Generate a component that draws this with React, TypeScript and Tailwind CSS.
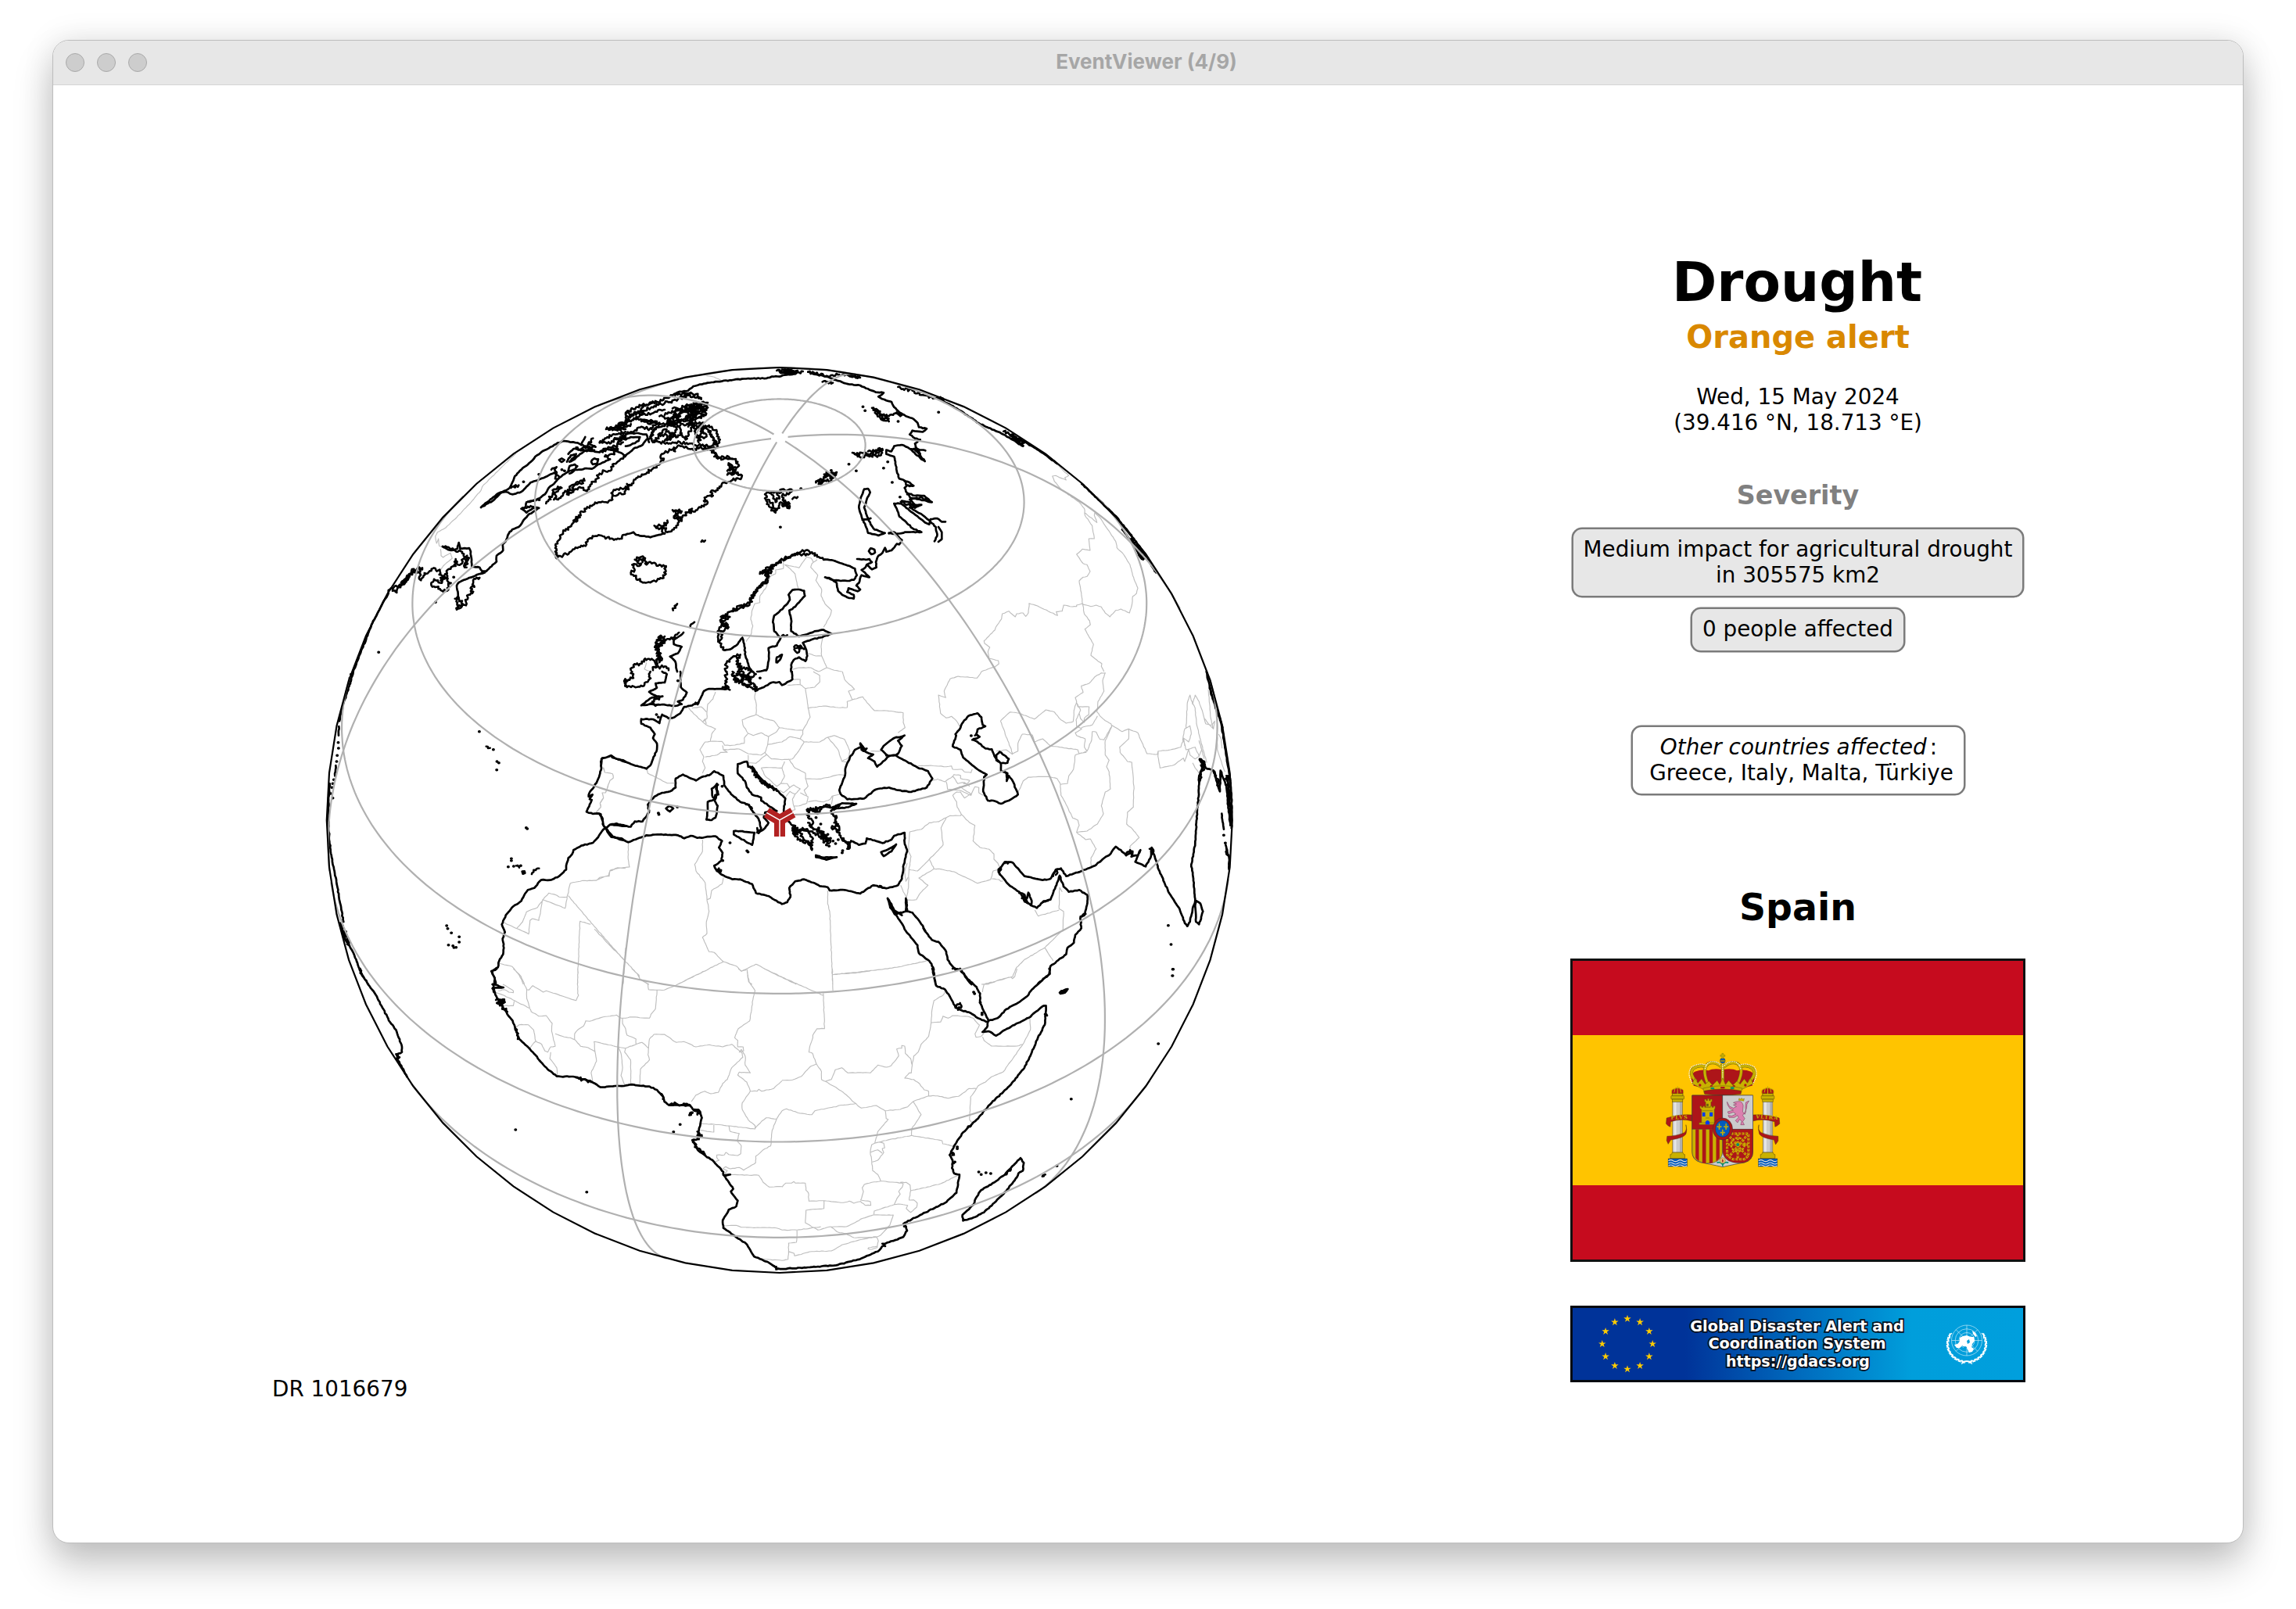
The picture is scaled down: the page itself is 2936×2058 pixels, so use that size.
import React from "react";

/* ------------------------------------------------------------------ */
/* Projection: near-side perspective seen from geostationary height    */
/* ------------------------------------------------------------------ */

const CX = 996.8;
const CY = 1050;
const R = 579;
const LAT0 = 39.416;
const LON0 = 18.713;
const P = 6.61;
const rad = (d: number) => (d * Math.PI) / 180;

function project(lon: number, lat: number): [number, number] | null {
  const f = rad(lat);
  const f0 = rad(LAT0);
  const dl = rad(lon - LON0);
  const cosc = Math.sin(f0) * Math.sin(f) + Math.cos(f0) * Math.cos(f) * Math.cos(dl);
  if (cosc < 1 / P) return null;
  const k = (Math.sqrt(P * P - 1) / (P - cosc)) * R;
  const x = k * Math.cos(f) * Math.sin(dl);
  const y = k * (Math.cos(f0) * Math.sin(f) - Math.sin(f0) * Math.cos(f) * Math.cos(dl));
  return [CX + x, CY - y];
}

function trace(points: ([number, number] | null)[]): string {
  let d = "";
  let pen = false;
  for (const p of points) {
    if (!p) {
      pen = false;
      continue;
    }
    d += `${pen ? "L" : "M"}${p[0].toFixed(1)} ${p[1].toFixed(1)}`;
    pen = true;
  }
  return d;
}

function graticule(): string[] {
  const out: string[] = [];
  for (const lat of [80, 60, 40, 20, 0, -20]) {
    const pts: ([number, number] | null)[] = [];
    for (let lon = -180; lon <= 180; lon += 1) pts.push(project(lon, lat));
    out.push(trace(pts));
  }
  for (const lon of [-120, -60, 0, 60, 120, 180]) {
    const pts: ([number, number] | null)[] = [];
    for (let lat = -80; lat <= 89; lat += 1) pts.push(project(lon, lat));
    out.push(trace(pts));
  }
  return out;
}

const limb = Array.from({ length: 60 }, (_, i) => {
  const a = rad(i * 6);
  return `${(CX + R * Math.sin(a)).toFixed(1)},${(CY + R * Math.cos(a)).toFixed(1)}`;
}).join(" ");

/* ------------------------------------------------------------------ */
/* Map data, grouped in tiles with a local coordinate system           */
/* ------------------------------------------------------------------ */

type Tile = {
  x: number;
  y: number;
  kx: number;
  ky: number;
  coast: string[];
  fjord: string[];
  border: string[];
  dots: string;
};

const tiles: Tile[] = [
  {
    x: 400, y: 460, kx: 3, ky: 3,
    coast: [
      "498 720 512 728 530 735 555 728 560 705 565 728 600 726 606 740 610 795",
      "645 570 680 540 705 520 740 505 755 495 765 475 775 450 800 425 830 400 860 370 890 350 920 335 940 322 965 315 990 320 1015 322 1030 330 1045 300",
      "645 570 690 545 720 515 740 510 765 520 800 510 820 490 835 475 855 468 900 450 920 440 935 435 930 460 940 462 925 480 905 495 890 520 870 535 850 545 825 548",
      "610 798 640 800 650 815 665 815 690 790 705 778 705 755 720 745 730 735 728 712 740 700 752 670 765 655 790 645 805 625 825 600 848 585 868 572 850 570 835 580 820 590 800 575 815 570 820 550 840 545 865 540",
      "660 820 630 828 600 840 560 858 552 870 560 918",
      "945 388 955 382 965 388 955 396 945 388",
      "940 462 960 445 985 430 1000 425 1030 425 1045 420 1070 422 1095 405 1120 395 1140 385",
      "975 395 990 370 1010 365 1000 380 985 395 1005 385 1025 365 1050 350",
      "980 430 985 412 1005 405 1015 412 1000 432 985 440",
      "1070 390 1080 382 1095 385 1090 402 1075 405 1068 395 1070 390",
      "980 365 1000 345 1030 350 1060 352 1100 358 1120 345 1150 350 1170 345",
      "155 1200 180 1135 205 1075 225 1020 262 950 290 900",
    ],
    fjord: [
      "290 895 300 880 322 897 335 875 350 858 342 868 365 838 388 806 398 822 402 803 420 802 408 820 415 850 428 822 445 818 455 806 470 804 488 816 485 828 500 838 492 850 515 840 508 825 530 800 548 795 548 768 556 790 575 778 578 755 568 738 545 735 520 722 498 720",
      "310 878 330 870 350 848 370 825 395 812 350 855 325 880",
      "590 800 580 795 585 770 592 755 596 770 588 790 582 800",
      "640 840 615 850 620 875 605 880 612 900 598 905 585 925 590 940 568 955 552 962 555 935 545 920 560 918 575 940 560 945",
      "455 870 465 845 480 850 495 860 490 840 505 830 515 850 530 860 520 870 515 890 495 890 475 875 455 870",
      "935 765 932 750 935 730 932 710 950 685 960 665 985 645 1000 620 1020 600 1050 575 1075 560 1100 550 1125 550 1150 540 1145 515 1165 500 1190 500 1200 490",
      "935 765 960 755 990 740 1020 722 1050 712 1060 690 1090 680 1130 685 1150 690 1180 690 1200 675",
      "1145 515 1155 525 1175 515 1190 520 1200 505",
      "895 555 905 540 920 520 925 500 940 490 955 495 935 510 925 540 945 535 960 515 985 505 975 520 1000 510 985 490 1010 475 1040 460 1030 480 1000 490 1000 505 1030 495 1045 505 1060 500 1070 480 1090 460 1100 440 1120 430 1140 430 1150 405 1165 400 1180 385 1200 370",
      "1030 330 1050 340 1070 345 1085 338 1055 330 1075 305",
      "1010 340 1040 352 1080 350 1050 335 1030 345",
      "1100 320 1130 300 1160 290 1200 280",
      "1100 322 1140 325 1170 305 1200 300",
      "1100 358 1130 345 1160 335 1190 320",
      "1140 385 1120 375 1150 365 1170 350 1150 340",
      "915 425 935 415 930 440 945 455",
      "760 495 790 485",
      "800 575 830 570 860 572",
      "1000 620 1015 622 1025 608",
      "1125 270 1155 265 1190 250",
      "1140 272 1180 262 1200 270",
    ],
    border: [
      "780 362 720 420 650 490 645 505 600 558 545 615 510 648 478 665 470 680 475 708 482 690 485 718 500 722",
      "490 730 492 755 500 762 528 745 535 765 500 795 488 815",
    ],
    dots: "252 1126 470 934 867 443 775 492 808 472 540 838 955 425 965 430 868 541 648 822 635 842",
  },
  {
    x: 800, y: 460, kx: 3, ky: 3,
    coast: [
      "180 140 200 128 240 122 260 105 300 95 330 90 400 82 470 75 540 75 560 68 590 68 610 62 640 58",
      "700 50 730 60 770 68 800 80 860 98 900 102 930 115 960 128 990 130 970 145 1000 160 1020 165 1030 185 1050 205 1075 220 1100 228 1120 245 1125 262 1155 268 1140 280 1100 275 1090 290 1110 305 1130 310 1110 325 1115 345",
      "1030 335 1060 330 1090 345 1130 380 1148 393 1130 370 1105 345 1150 352",
      "1090 345 1115 350 1130 365 1115 340",
      "1030 335 1020 355 1000 350 1000 365 1030 375 1035 395 1040 430 1050 460 1075 470 1090 475 1105 487 1080 485 1070 495 1080 515 1110 525 1145 525 1175 550 1130 540 1110 535 1090 540 1110 560 1135 560 1110 572 1090 550 1060 545",
      "1060 555 1030 555 1040 575 1050 605 1075 625 1100 650 1135 665 1080 665 1035 672 1010 668",
      "1060 558 1100 590 1145 625 1165 635 1170 615 1195 612 1212 625 1227 625",
      "1090 570 1140 600 1165 620 1190 645 1195 680 1185 700",
      "1200 645 1213 665 1213 692 1200 702",
      "1035 672 1060 695 1050 712 1040 710 1020 735 1000 740 995 725 985 745 970 755 960 780 962 800 945 808 925 790 920 800 905 810 935 838 905 830 895 860 885 870 900 885 890 892 855 880 850 895 875 905 875 920 850 915 830 905 815 890 810 860 780 840 765 838 800 850 850 852 875 848 887 830 880 805 860 795 830 785 790 772 765 770",
      "925 790 945 780 935 768 905 770 888 768",
      "933 738 940 727 955 732 957 743 943 750 933 738",
      "448 1070 455 1095 460 1140 475 1185 485 1200",
      "595 1070 570 1045 565 1010 570 985 590 970 615 945 630 925 625 905 640 887 665 885 685 890 688 910 665 935 640 960 628 965 635 1000 635 1045 665 1065 700 1055 725 1045 760 1040 790 1055 755 1068 720 1075 680 1090 690 1110 697 1140 690 1160 665 1145 645 1155 635 1175 635 1200",
      "595 1070 580 1100 548 1110 550 1150 545 1180 540 1195 505 1200",
      "578 1165 580 1145 600 1135 595 1150 582 1165",
      "900 540 915 500 930 498 938 512 925 540 915 570 925 600 940 635 955 655 995 668 970 678 930 668 920 640 905 605 895 570 900 540",
      "908 618 940 612",
      "380 1118 400 1115 430 1095 448 1070",
      "0 675 30 665 40 675 95 685 150 670",
      "198 1200 190 1160 170 1142 200 1130 215 1105 185 1095 185 1078 205 1065 222 1050",
      "-85 345 -40 350 0 372",
      "0 372 30 345 65 330 85 305 80 290 40 285 0 288",
      "0 310 20 300 55 300 50 315 20 330 0 335",
      "105 320 95 300 105 275 120 262 150 258",
    ],
    fjord: [
      "765 770 735 760 715 742 690 735 665 745 640 755 610 765 585 785 550 800 515 825 545 820 540 845 520 865 505 885 490 905 475 935 445 945 420 960 375 985 365 1010 390 1018 360 1030 355 1080 365 1100 380 1118",
      "710 745 680 750 650 748 620 765 590 775 570 790 555 810 540 825",
      "560 795 545 810 560 815 535 830 550 835 545 850 525 870 510 880",
      "500 885 485 915 475 945 440 955 415 965",
      "365 990 400 990 370 1005 395 1030 362 1045 370 1070 355 1085",
      "0 500 30 470 60 450 100 425 130 405 145 390 135 370 150 360 175 350 190 355 185 340 210 335 240 345 260 350 290 340 320 345 345 360 340 375 365 380 395 375 415 385 430 395 430 415 400 420 395 400 430 440 390 445 430 435 445 455 410 465 380 475 360 490 345 510 330 505 335 525 310 530 300 545 315 550 290 570 275 580 245 590 255 575 225 600 205 610 190 600 215 585 180 580 200 595 185 610 215 615 200 630 185 655 160 665 145 645 155 640 160 620 145 640 110 640 140 655 150 670",
      "325 350 350 370 375 385 410 385",
      "390 430 415 425 405 440",
      "0 505 20 485 5 480",
      "20 820 35 810 25 790 45 795 60 785 35 770 60 760 75 765 75 785 100 785 130 790 155 795 150 830 130 845 100 855 60 855 40 840 20 820",
      "50 775 70 765 65 780",
      "540 515 590 515 600 500 640 505 625 520 600 525 610 550 630 565 620 572 595 550 590 560 575 590 555 570 540 545 540 515",
      "560 520 575 550 590 530 580 515",
      "545 540 565 560 575 580",
      "605 545 625 550 620 570 600 560",
      "640 538 660 530",
      "730 475 760 460 770 435 800 440 785 450 810 435 790 465 760 470 740 480",
      "770 440 785 460 800 450 765 455 780 445 795 458",
      "730 470 755 475 745 465",
      "870 360 890 375 915 378 930 365 905 360 885 368 870 360",
      "930 355 960 350 985 345 960 365 935 375 950 360",
      "985 345 980 370 960 372",
      "945 188 970 200 985 215 1005 220 1010 240 985 235 965 215 950 190",
      "960 200 990 230 1000 225",
      "1010 220 1030 210 1060 215 1040 205",
      "1070 470 1085 485 1100 488",
      "1080 520 1105 535 1140 535 1170 548",
      "1055 548 1080 560 1110 568",
      "1010 670 1035 668",
      "650 1100 675 1105 665 1125 650 1120 650 1100",
      "655 1110 690 1110",
      "385 1200 388 1165 410 1145 440 1135 425 1160 445 1180 430 1200",
      "425 1160 440 1190 470 1188 480 1200",
      "120 1160 125 1140 115 1100 130 1065 150 1065 145 1085 165 1075 180 1075 205 1050",
      "130 1160 135 1130 125 1110 140 1100 135 1080 150 1090",
      "120 1140 140 1150 130 1165 125 1120 120 1085 140 1070",
      "20 1195 30 1175 55 1170 75 1150 105 1155 115 1170 105 1195",
      "120 1165 115 1185 150 1180 165 1195",
      "248 1030 258 1015 264 1010",
      "182 965 188 948 198 940 190 955",
      "290 702 305 697",
      "600 1062 620 1060",
      "-75 270 -40 262 0 235 30 215 60 190 100 170 140 160 180 140",
      "-60 272 -30 275 0 262 20 250",
      "-40 262 -10 255 15 235 0 225",
      "0 225 50 205 100 185 150 170 200 155 240 140 290 155",
      "0 215 20 195 60 180 90 172 120 165",
      "0 250 40 230 80 235 120 240 100 270 60 260 20 280 0 290",
      "90 320 110 270 140 250 200 240 250 230 300 220",
      "110 320 150 270 180 300 200 260 230 310 260 250 280 320 300 260 330 290 350 330 300 335 250 325 180 320 110 320",
      "130 220 180 230 200 190 240 210 260 170 310 170 310 210 270 230 240 250",
      "270 270 320 255 350 280 362 310 350 340 300 345",
      "150 215 190 200 230 180 300 190 250 195 200 215 160 240 190 260",
      "160 245 220 235 280 210 240 190 190 220 220 250 300 245",
      "180 190 230 200 290 180 300 205 240 215",
      "230 180 280 175 315 168 295 190 250 185",
      "125 290 160 295 150 315 175 305 170 285 200 300 215 285",
      "60 240 90 250 130 245 90 240",
      "30 235 60 215 110 205 150 195",
      "160 260 190 245 180 225 210 220 200 240 180 255 210 255",
      "260 200 300 200 310 190 280 188 250 205",
      "230 225 260 215 270 225 240 235",
      "290 280 310 290 300 305 280 295",
      "320 275 335 300 345 320 330 335",
      "240 260 270 255 310 262 290 270",
      "210 150 240 135 270 135 290 150",
      "190 140 220 132 250 130",
      "-45 310 0 295 -30 320 0 305",
      "0 212 40 210 70 200 40 215",
      "580 45 620 52 660 45 600 40 640 60 680 48",
      "600 44 650 50 625 58 590 48",
      "700 50 760 65 820 60",
      "755 88 795 92 765 85",
      "860 62 900 72 870 70 830 62",
      "1045 108 1100 122 1150 140 1200 155",
    ],
    border: [
      "310 65 340 70 365 82",
      "735 770 715 785 710 800 737 830 730 850 752 885 750 910 765 940 790 965 785 985 760 1030",
      "610 790 625 800 650 825 655 850 662 885",
      "610 790 635 795 665 802 680 780 695 760 712 765 720 780",
      "605 770 605 805 575 810 575 825 555 835 540 875 515 910 515 935 495 940 485 965 480 1000 488 1025 480 1060 462 1085",
      "755 1070 750 1105 752 1140 730 1140 697 1130",
      "752 1140 772 1185 740 1200",
      "772 1185 800 1195 830 1200",
      "640 1192 665 1185 710 1185 740 1200",
      "80 1165 72 1190 95 1200",
    ],
    dots: "910 184 918 199 856 404 884 430 989 419 1022 474 1052 530 593 646 672 498 1045 240 788 428 1005 395 1200 205",
  },
  {
    x: 1200, y: 460, kx: 3, ky: 3,
    coast: [
      "0 152 70 190 155 247 250 290 320 332",
      "330 318 410 368 455 402",
      "550 480 620 545 680 605",
      "680 603 730 665 790 745 835 820",
      "705 655 740 700 780 768 792 765",
      "760 715 800 760 830 815",
      "285 305 325 333",
    ],
    fjord: ["250 278 290 295 320 330 290 305 330 322 280 290 325 335", "740 690 765 735 785 770 760 720", "0 150 20 158 0 152"],
    border: [
      "455 405 500 448 485 455 490 465 450 448 437 450 445 470 470 500 540 550 560 575 562 600 590 640 598 690 577 690 582 735 552 730 530 750 555 785 570 790 582 815 570 835 555 838 540 852 545 880 553 940",
      "560 590 608 628 598 600 600 590 620 610 650 655 680 700 685 725 710 750 735 790 745 830 765 880 760 900 745 912 742 945 733 975 700 960 680 965 658 990 640 975 625 952 605 945 585 950 550 940 530 945 530 950 505 950 480 945 475 968 452 970 457 985 380 948 348 938 345 975 335 988 325 975 300 978 295 990 270 968 245 978 242 998 220 1030 217 1040 175 1082 177 1092 197 1107 190 1125 195 1150 230 1158 232 1170 215 1183 190 1190 165 1200",
      "553 940 560 980 580 1005 583 1020 562 1037 580 1070 595 1095 585 1138 600 1150 627 1170 625 1180 635 1200",
    ],
    dots: "",
  },
  {
    x: 400, y: 860, kx: 3, ky: 3,
    coast: [
      "155 0 145 40 130 85 115 130 102 190",
      "65 430 60 500 60 600 68 690 80 750 95 830 105 890 118 960",
      "105 965 120 1020 140 1050 160 1090 185 1155 213 1200",
      "100 210 99 245",
      "88 360 85 400",
      "1200 347 1150 330 1143 322 1130 328 1110 332 1105 345 1107 370 1098 405 1080 440 1060 468 1058 480 1073 472 1062 490 1070 492 1062 510 1050 538 1075 546 1100 545 1112 565 1112 585 1125 600 1140 588 1165 583 1200 592",
      "1200 650 1185 640 1145 635 1130 615 1125 600 1115 605 1095 635 1075 657 1030 668 1000 685 995 700 980 715 972 745 972 760 945 785 910 800 875 800 850 830 825 838 810 860 800 880 770 900 740 935 725 970 737 1000 728 1025 733 1060 730 1085 715 1110 710 1135 685 1150 697 1175 702 1200",
      "803 767 812 766 814 773 806 776 803 767",
    ],
    fjord: ["110 970 120 1010 138 1050 130 1010 115 985", "840 777 855 762 868 755", "665 287 672 294 680 293", "145 10 138 50", "180 1145 188 1160", "780 745 792 752 786 744"],
    border: [
      "1113 368 1120 387 1150 392 1153 408 1140 418 1123 465 1110 465 1115 485 1102 505 1105 520 1087 540",
      "1200 755 1170 752 1140 763 1137 785 1100 790 1087 802 1035 802 988 812 978 855 975 865 945 865 935 858 905 850 885 872 862 905 820 922 805 960 782 985",
      "730 962 828 1007 833 955 842 948 867 955 882 875 968 908 978 855",
      "980 860 1080 978 1195 1107",
      "1066 970 1025 958 1015 1200",
      "715 1120 735 1125 765 1132 792 1165 808 1200",
      "1200 1060 1190 1200",
    ],
    dots: "97 272 98 294 93 322 91 345 80 415 76 430 73 445 68 468 76 485 638 230 692 299 706 345 713 350 705 377 818 599 822 603 761 718 761 725 749 749 770 747 797 745 513 975 517 986 531 1003 561 1018 561 1038 520 1049 537 1052 541 1059 549 1058 1198 45 1196 38 1199 55",
  },
  {
    x: 760, y: 860, kx: 3, ky: 3,
    coast: [
      "27 370 27 335 50 328 65 322 85 335 110 340 140 355 165 362 200 373 215 360 225 335 240 300 240 275 225 255 232 240 215 215 180 200 180 182 225 183 250 198 260 165 285 180 300 178 330 160 345 135 375 130 400 118 420 75 440 66 500 68 510 65",
      "610 45 625 70 650 60 680 42 710 40 720 52 745 38 760 30 758 0",
      "330 0 332 60 355 80 340 108 320 115 335 125 310 132 275 128 215 125 180 130 220 100 262 95 240 95 210 78 240 62 235 45 270 42 278 10 260 0",
      "0 545 25 547 35 590 45 603 60 587 140 595 155 575 185 575 210 540 205 510 230 480 260 465 290 460 312 445 312 410 340 395 390 418 420 402 440 398 460 382 495 400 498 435 530 475 560 500 590 510 615 545 630 565 640 600 630 620 655 600 668 580 650 560 655 540 670 535 700 535 640 495 640 483 605 472 585 445 578 420 550 390 550 355 585 345 590 365",
      "590 365 610 370 630 400 665 435 700 455 733 487 725 545 735 565 760 590 770 600",
      "535 612 560 612 615 618 605 665 560 640 535 625 535 612",
      "470 432 450 450 452 475 462 492 472 470 470 432",
      "435 500 460 490 473 515 465 560 450 570 430 568 435 530 435 500",
      "275 525 290 515 303 525 290 537 275 525",
      "45 603 70 632 130 655 200 628 250 625 320 628 345 640 370 630 395 638 465 632 490 650 478 675 492 695 488 725 460 745 470 765 500 785 530 797 560 797 605 815 620 850 670 862 720 892 740 885 752 865 748 830 770 805 805 797 840 810 865 823 895 827 903 840 960 838 1020 852 1070 820 1120 832 1165 820 1180 795 1187 740 1200 690 1190 655 1190 618 1150 630 1140 645 1105 658 1045 640 1040 660 1015 665 985 650",
      "850 705 870 712 930 712 890 722 850 712 850 705",
      "1100 693 1125 683 1158 663 1140 690 1110 708 1100 693",
      "940 455 960 405 965 365 980 330 1000 300 1020 290 1040 298 1020 275 1025 300 1045 310 1070 318 1050 332 1075 345 1085 365 1130 325 1150 320 1180 335 1240 368 1280 382 1297 410 1275 445 1215 462 1165 455 1130 445 1080 452 1035 487 970 490 945 470 940 455",
      "1130 325 1100 300 1110 285 1150 255 1190 245 1165 265 1180 285 1165 315 1150 322 1120 322",
      "1195 870 1195 920 1160 930 1125 870 1135 905 1175 960 1195 995 1240 1050 1245 1080 1285 1110 1300 1135 1305 1180 1310 1200",
      "1197 875 1200 920 1220 925 1260 975 1265 990 1295 1030 1320 1037",
      "1125 870 1140 892 1150 915 1180 935",
      "920 530 930 515 950 505 1005 507 975 520 935 525",
    ],
    fjord: [
      "115 35 125 60 190 55 210 30 215 0",
      "115 35 150 25 145 0",
      "250 100 215 122 240 128",
      "505 68 508 40 503 20 508 0",
      "520 70 515 60 500 60 490 66",
      "530 0 540 40 570 35 560 15 590 10 580 30 600 40",
      "535 15 555 45 575 20 545 8 570 0 590 25",
      "545 30 580 50 605 45 590 15 600 0",
      "600 0 620 10 600 20",
      "560 40 600 60 625 72 615 50",
      "598 365 615 390 630 410 655 430 690 450 670 440 640 420",
      "600 370 612 380 606 365",
      "645 430 680 445 700 458",
      "930 525 905 522 880 520 850 520 860 540 820 530 820 560 840 580 825 590 870 620 890 640 840 620 810 605 770 605 790 620 800 650 830 660 835 685 820 655 790 650 770 625 760 600",
      "760 600 765 625 780 625 770 610",
      "815 530 840 525 855 545 870 520 890 510 905 520",
      "820 580 850 605 880 615 890 640",
      "765 590 785 610 820 612 835 635 830 670",
      "910 545 930 560 920 580 940 600 930 615 945 630 960 650 975 655 985 650",
      "920 555 935 585 910 600 940 610",
      "960 650 980 670 970 680 975 655 950 645",
      "870 625 880 650 900 660 890 640 905 655",
      "910 545 915 525 940 515",
      "582 510 605 525",
      "1020 280 1030 300 1045 295",
      "470 760 485 768 478 755",
      "1095 822 1110 830",
      "470 430 474 460 464 490",
      "625 618 632 610 625 600",
      "1262 985 1270 995",
      "385 125 400 120",
    ],
    border: [
      "35 368 40 387 70 392 73 408 60 418 43 465 30 465 35 485 22 505 25 520 7 540",
      "200 373 205 390 245 410 280 428 310 428",
      "415 390 425 370 415 345 420 328 405 300 425 270 445 268 450 240 465 220 430 205 400 180 370 150 360 135",
      "420 190 432 180 432 155 435 125 455 105 465 78",
      "375 140 410 135 430 155",
      "415 195 425 182 430 200",
      "445 268 490 268 500 283 530 283 575 275 575 255 590 237 570 205 567 185 620 165 622 130 615 95 620 70",
      "425 328 470 320 485 310 510 310 495 300 492 283",
      "495 300 555 297 590 315 640 320 655 310 665 280 668 250 640 235 610 245 590 237",
      "620 165 650 180 690 190 710 215 700 230 668 250",
      "710 215 740 220 780 225 800 225 800 240 790 258 750 250 720 270 680 278 665 280",
      "800 225 815 200 828 175 820 140 815 100 810 65 790 50 740 52",
      "790 50 790 30 760 30",
      "810 65 845 60 865 40 865 15 840 0",
      "820 140 880 132 935 138 970 138 970 115 990 108 975 75 998 68 960 30 952 0",
      "990 108 1030 97 1045 118 1075 150 1120 150 1185 158 1185 195 1192 215 1165 235",
      "790 258 805 270 780 310 760 335 720 338 680 335 660 318 655 310",
      "805 270 865 270 895 252 935 300 950 345 975 330 980 305 960 260 920 245 895 252",
      "950 345 975 348",
      "745 335 770 370 810 390 810 410 870 412 940 395 960 398",
      "590 320 590 350 620 352 660 318",
      "640 370 655 400 700 440 715 430 730 400 720 370 670 368 640 370",
      "720 370 730 345",
      "715 430 740 430 750 445 725 465 710 455",
      "750 445 765 435 790 450 770 470 750 460 735 480",
      "770 470 760 490 765 515 785 515 815 505 820 480 790 465",
      "810 410 820 440 805 455 815 475",
      "765 515 770 530 740 540",
      "820 500 850 495 880 500 905 490 912 478 940 470",
      "915 478 910 510",
      "130 655 130 720 135 750 90 755 60 765 55 782 0 802",
      "415 645 415 690 385 740 390 765 425 810 432 870 440 920 430 960 432 1005 415 1020 440 1075 460 1078 495 1113",
      "495 790 490 815 450 840 445 870 432 875",
      "495 1113 320 1200",
      "495 1113 545 1130 565 1150 620 1123 775 1200",
      "585 1140 592 1190 605 1200",
      "895 840 895 890 903 920 908 1050 914 1200",
      "914 1163 1010 1155 1160 1135 1285 1108",
      "0 988 165 1160 175 1180 210 1200",
      "1175 820 1197 870 1205 830 1207 760 1215 710 1205 690 1210 615 1255 605 1285 580 1320 575",
      "1197 877 1235 875 1250 850 1280 820 1245 792 1303 757 1320 757",
      "1207 760 1240 765 1285 720 1320 685",
      "1285 720 1303 757",
      "1200 735 1190 770 1195 805 1203 790",
      "1060 305 1100 305",
      "1240 362 1290 360 1320 363",
      "1295 418 1320 412",
    ],
    dots: "238 165 245 175 245 543 247 548 318 520 520 657 585 688 589 692 492 725 950 695 952 687 868 585 895 625 850 560 890 665 915 650 900 670 880 655 925 660 490 440 635 25 320 35 870 640 860 600 935 645 905 640",
  },
  {
    x: 1200, y: 860, kx: 3, ky: 3,
    coast: [
      "55 287 68 245 65 240 85 215 90 200 115 170 150 160 165 175 170 205 180 210 150 222 145 240 158 250 130 262 150 270 180 295 205 298 215 325 240 355 240 380 265 390 262 420 270 400 285 420 305 472 270 495 240 507 210 495 190 495 172 460 175 405 185 395 150 375 95 330 85 300 55 287",
      "235 308 270 335 265 350 240 352 222 340 222 320 235 308",
      "235 778 232 760 255 730 285 733 330 785 400 800 430 795 450 760 470 755 490 785 550 765 600 745 630 720 660 700 680 672 700 685 720 705 745 690 740 710 765 705 775 685",
      "775 685 755 730 795 748 815 710 818 675 830 710 845 760 885 850 925 910 945 965 955 977 965 960 975 910 985 880 980 810 970 740 985 660 992 540 998 480 1000 400 1015 360 1002 338 1020 345 1025 370 1055 380 1080 460 1082 380 1105 440 1110 500 1120 590",
      "235 778 275 823 310 845 335 880 355 897 378 907 400 885 430 875 465 783 480 825 500 845 540 838 572 858 570 895 560 935 545 940 548 985 525 1010 520 1040 495 1060 490 1085 430 1130 425 1160 380 1200",
      "335 880 345 848 358 880 355 897",
      "990 880 1005 890 1015 920 1000 970 988 960 985 900 990 880",
      "1087 545 1090 575 1095 605",
      "1102 665 1108 690 1115 715 1115 760",
      "1028 0 1045 80 1085 200 1110 360 1120 420 1125 500 1124 600",
      "1035 20 1050 90 1070 150 1090 215",
      "1110 400 1116 480 1124 590",
      "0 1037 30 1075 35 1105 60 1138 85 1147 127 1200",
    ],
    fjord: [
      "1002 335 1015 345 1010 365 1018 370 1005 400 1000 425",
      "720 705 735 685 745 705",
      "810 680 825 685 820 700",
      "1105 400 1112 430 1108 450",
      "1055 380 1065 400 1078 450",
      "440 785 455 760 450 780",
      "310 850 330 862 320 870 345 890 330 855",
      "400 885 420 880",
      "230 765 240 755 235 775",
      "550 940 565 930",
      "255 735 270 732",
      "255 385 262 415",
      "140 245 155 250",
      "1105 680 1110 705",
    ],
    border: [
      "165 0 148 25 75 18 45 28 22 75 28 100 0 90 8 160 30 178 50 172 70 190 80 208 90 205",
      "0 363 30 365 50 362 55 375 90 375 100 385 125 388 130 375",
      "0 415 25 423 55 402 60 395 85 398 85 410 120 418 110 430 95 430",
      "30 423 35 452 80 455 125 475 140 442 155 445 155 465 172 475",
      "80 440 125 470 100 485 85 462 70 462 55 475 70 500 72 520 88 548 120 580 140 590 133 650 160 675 195 682 213 700 213 720 228 735 235 750",
      "55 402 75 430 100 425 120 440",
      "0 577 30 560 45 553 85 553 88 548",
      "30 560 10 600 18 665 0 685",
      "0 757 60 768 150 812 200 798 210 765 232 760",
      "205 795 232 798 240 805 248 803",
      "165 1200 190 1200 230 1185 285 1170 300 1135 330 1105 408 1060 478 990 480 920 463 910 465 828 475 845",
      "463 915 383 938 370 915",
      "408 1060 440 1110",
      "238 190 275 155 310 160 368 182 412 147 445 155 470 185 490 198 517 192 520 150 530 115 525 100 555 80 548 55 578 45 600 20 625 5 640 5 630 35 635 75 612 115 608 155 625 175 640 188 662 200 665 210 635 262 620 260 605 232 590 230 588 262 570 305 560 290 563 258 530 245 525 235 550 220 530 210 528 185 540 160 545 148 530 120 535 135 578 135 577 165 560 178 560 195 545 180 540 160",
      "238 190 285 315 305 305 305 275 322 240 360 243 368 270 400 258 430 285 535 300 540 315 525 320 518 375 500 400 495 430 468 433",
      "222 305 260 300 285 318",
      "548 215 590 205 610 170",
      "570 305 540 315 568 310",
      "305 465 325 420 345 405 420 403 455 410 468 433 470 475 490 510 515 562 535 570 540 590 530 617 565 645 583 642 605 680 585 715 585 750",
      "530 617 570 612 610 585 633 545 625 515 640 462 660 450 655 385 645 365 655 340 640 320 640 265 665 210",
      "662 205 705 230 730 220 765 235 780 270 800 315 840 318 843 305 890 300 930 290 940 260 950 300 985 290 1000 325 985 335 965 320 960 300",
      "730 220 730 258 695 290 697 310 725 345 742 348 750 440 748 520 725 540 722 585 745 605 770 637 735 670 735 690",
      "843 305 842 325 850 370 905 358 940 332 945 345 960 300",
      "937 265 945 220 965 208 970 240 960 270 940 255 945 285",
      "950 215 955 120 965 90 975 125 985 90 1000 115 1015 160 1025 200 1050 205 1060 190 1055 220 1040 205 1020 180",
      "970 110 985 140 990 200 1010 280 1030 350",
      "1000 325 1010 300 1000 265 1020 335",
      "975 350 985 370 1000 390",
      "1035 70 1045 180 1055 220",
      "1045 90 1060 140 1070 165 1070 300 1088 355 1100 385",
      "1075 240 1085 260 1088 295",
    ],
    dots: "125 246 881 974 892 1047 900 1142 898 1167 1094 628 1100 658",
  },
  {
    x: 400, y: 1240, kx: 2.6133, ky: 3,
    coast: [
      "615 0 598 12 608 35 605 60 637 72 605 75 610 100 620 120 640 122 615 132 632 140 650 175 668 200 680 240 690 270 735 320 775 375 815 413 870 414 930 433 962 455 1010 450 1040 450 1060 445 1125 452 1150 465 1170 490 1175 510 1190 523 1260 525 1275 545 1292 548 1300 572 1290 620 1285 655 1268 658 1290 700 1340 740 1372 780 1372 792 1395 790 1375 795 1405 845 1397 855 1420 890 1415 912 1390 925 1370 965 1372 995 1448 1055 1475 1105 1520 1125 1550 1150 1568 1152",
      "158 0 162 20 210 100 258 205 278 235 298 300 298 320 280 330 282 345 315 415",
    ],
    fjord: [
      "612 120 640 118 618 130 642 128 625 142 635 120",
      "600 60 605 90",
      "625 140 650 165",
      "678 230 685 270",
      "1190 523 1215 518 1225 525 1250 518 1262 525",
      "1165 480 1170 500",
      "1275 540 1295 550 1285 560",
      "1285 625 1300 645 1285 640 1290 655",
      "1270 665 1285 690",
      "880 418 930 435",
      "1540 1140 1555 1152",
      "278 328 290 340 280 345",
      "1258 562 1268 552 1260 555",
      "1290 690 1310 712",
    ],
    border: [
      "670 0 695 28 715 80 715 115 725 150",
      "885 0 885 95 888 102 880 122 780 85 770 90 735 65 722 82 715 80",
      "605 90 640 103 675 123 725 152",
      "635 60 650 70 670 85 670 92 655 90 640 80 620 85",
      "640 142 670 142 673 125",
      "725 152 730 165 755 182 780 180 800 210 798 240 810 298 795 300 785 320 775 315 765 290 745 278 725 305",
      "680 225 690 215 720 215 738 235 745 278",
      "795 320 792 345 815 380 818 413",
      "810 250 840 262 860 265 875 272 875 250 885 235 905 220 912 200 925 202 970 185 1015 178 1030 190 1045 190 1060 185 1125 190 1130 175 1145 155 1150 82",
      "875 272 895 298 920 303 943 318 940 280 1020 300 1045 305 1080 290 1080 270 1050 255 1045 230 1035 210 1035 190",
      "943 318 948 355 930 400 935 430",
      "1020 300 1030 325 1035 380 1030 410 1042 445",
      "1045 305 1042 320 1062 350 1063 445",
      "1080 290 1100 283 1122 305 1120 330 1125 350 1095 385 1093 445",
      "1122 305 1125 270 1140 252 1175 252 1215 283 1240 280 1280 300 1325 292 1370 300 1400 290 1435 325 1437 340 1400 380 1385 425 1370 440 1355 475 1330 480 1310 470 1280 485 1265 510",
      "1066 0 1090 25 1092 38 1120 60 1122 80 1175 82 1205 68 1325 0",
      "1450 0 1458 50 1478 85 1472 110 1460 200 1422 230 1410 265 1420 275 1420 300 1438 300 1440 315 1425 320 1432 310 1445 335 1445 370 1462 400 1425 397 1420 408 1450 435 1462 470 1435 515 1435 540 1455 580 1478 602 1478 615 1390 603 1340 597 1290 595",
      "1422 0 1432 10 1448 5",
      "1508 0 1568 33",
      "1462 470 1485 470 1490 463 1500 470 1540 460 1568 430",
      "1478 612 1500 585 1515 572 1550 577 1568 545",
      "1550 577 1535 620 1530 680 1505 695 1480 720 1480 745 1440 773 1425 763 1395 768 1380 760 1370 768",
      "1340 600 1340 627 1295 620",
      "1390 603 1395 625 1425 632 1418 660 1432 680 1430 710 1420 717 1390 713 1380 705 1375 715 1350 715 1350 725 1358 735 1345 740",
      "1370 768 1385 775 1378 785 1395 790 1490 793 1505 820 1525 838 1568 836",
      "1375 987 1415 985 1432 992 1550 995 1568 1003",
      "1495 1113 1520 1115 1568 1120",
    ],
    dots: "1227 598 1205 626 677 618 915 857 1262 560 1267 553",
  },
  {
    x: 1000, y: 1240, kx: 2.6133, ky: 3,
    coast: [
      "502 0 508 30 515 65 545 80 560 105 580 150 600 160 630 170 655 190 688 205 685 225 670 243 690 240 715 257 745 235 790 208 825 188 870 145 882 142 878 215 855 265 835 320 810 380 765 445 700 515 650 580 605 628 575 680 560 715 570 735 568 765 575 785 593 790 583 860 550 895 480 935 410 975 418 1005 405 1030 345 1055 320 1085 260 1115 180 1138 100 1145 0 1152",
      "595 0 620 40 650 70 662 95 662 130 675 165 690 200 720 190 750 155 790 130 820 105 835 80 895 20 893 0",
      "797 727 808 745 805 775 790 785 785 800 740 865 675 935 640 955 605 967 603 945 640 905 648 880 665 850 710 820 745 790 765 765 797 727",
      "928 92 940 84 955 78 945 92 930 96",
    ],
    fjord: ["582 148 595 132 600 145 588 158", "570 0 590 5", "878 175 886 180", "335 1055 345 1065", "567 705 575 715", "620 610 632 602", "765 770 745 790", "870 797 880 790", "406 978 414 990", "930 90 950 82"],
    border: [
      "168 0 170 85", "170 23 260 12 350 0", "0 33 138 103 138 95 142 230 117 230 103 255 103 265 95 290 90 320 102 325 115 365 132 395 132 425 145 433 150 430",
      "115 365 95 375 65 413 35 427 0 428",
      "145 433 165 425 178 388 200 380 220 400 262 398 295 400 320 370 350 378 365 372 390 335 383 308 400 305 400 295 410 297 412 325 430 345 435 370 432 400 425 400 410 420 440 425 460 442 475 465 490 470 490 488",
      "145 433 180 455 205 475 220 490 235 508 265 535 315 525 345 545 395 540 420 530 438 510 465 498 490 488",
      "435 370 440 335 455 320 465 290 490 260 498 208 500 170 508 122 540 100 545 85",
      "498 208 530 205 538 182 555 190 570 180 620 183 640 190 655 212 660 215",
      "685 235 665 260 648 263 645 250 660 215",
      "670 262 675 275 700 297 785 297 805 290 830 235 828 190",
      "805 290 740 395 700 415 680 435 655 450 650 460 625 460 590 490 555 497 520 488 490 488",
      "650 460 630 492 627 580 635 592",
      "0 545 15 538 60 555 100 560 110 545 160 533 180 530 190 525 245 518",
      "345 545 348 575 355 578 320 625 310 670 300 675 295 705 300 740 303 775 320 790 330 815",
      "438 510 465 560 433 615 433 640 535 660 537 672 580 683",
      "433 640 340 660 310 670",
      "310 670 325 665 340 670 343 688 335 690 340 705 320 735 302 742",
      "295 705 320 695 335 708",
      "330 815 300 820 275 828 268 840 272 855 263 888 295 893 297 908 278 908 262 893 240 900 225 892 205 898 140 890 140 890 90 892 88 860 80 850 78 823 45 823 40 817 32 823 12 823 0 838",
      "330 815 400 822 405 825 402 838 390 855 395 865 385 880 375 905 390 903 420 908 415 920 430 935 450 915 452 900 440 887 425 888 430 852 428 830 415 820 395 820",
      "430 852 480 840 530 825 585 795",
      "140 890 140 920 80 927 78 975 120 1003 160 990 215 990 270 958 305 945 372 945 360 985 330 1022 315 1030 240 1032 215 1018 185 1010 165 992",
      "375 905 308 930 307 943",
      "0 1003 50 1003 110 993 130 990", "50 1005 48 1050 22 1053 22 1085 40 1092 42 1102 100 1085 165 1083 200 1060 260 1040 315 1028",
      "22 1085 20 1115 0 1120",
      "315 1028 322 1045 318 1070 300 1077 287 1075 290 1070 318 1065",
      "785 0 778 30 770 38 765 32 720 45 675 60 670 90",
    ],
    dots: "640 90 643 96 668 170 668 176 585 684 585 691 572 710 577 742 572 746 657 780 665 790 681 783 697 786 918 757 966 500 1257 288 1305 2 1304 27 873 795 662 130",
  },
];

/* Adds fine irregularity along a polyline, repeatable between renders. */
function roughen(src: string, t: Tile, amp: number, step: number): string {
  const n = src.split(" ").map(Number);
  let seed = n[0] * 31 + n[1] * 17 + n.length + 7;
  const rnd = () => {
    seed = (Math.abs(seed) * 16807 + 11) % 2147483647;
    return seed / 2147483647 - 0.5;
  };
  let d = "";
  let px = 0;
  let py = 0;
  for (let i = 0; i < n.length; i += 2) {
    const x = t.x + n[i] / t.kx;
    const y = t.y + n[i + 1] / t.ky;
    if (i === 0) {
      d = `M${x.toFixed(1)} ${y.toFixed(1)}`;
    } else {
      const len = Math.hypot(x - px, y - py);
      const parts = amp > 0 ? Math.max(1, Math.round(len / step)) : 1;
      for (let k = 1; k < parts; k++) {
        const f = k / parts;
        const o = rnd() * 2 * amp;
        d += `L${(px + (x - px) * f - ((y - py) / len) * o).toFixed(1)} ${(py + (y - py) * f + ((x - px) / len) * o).toFixed(1)}`;
      }
      d += `L${x.toFixed(1)} ${y.toFixed(1)}`;
    }
    px = x;
    py = y;
  }
  return d;
}

function dotPath(t: Tile): string {
  if (!t.dots) return "";
  const n = t.dots.split(" ").map(Number);
  let d = "";
  for (let i = 0; i < n.length; i += 2) {
    d += `M${(t.x + n[i] / t.kx).toFixed(1)} ${(t.y + n[i + 1] / t.ky).toFixed(1)}h.4`;
  }
  return d;
}

function Globe() {
  const borders = tiles.map((t) => t.border.map((s) => roughen(s, t, 0.35, 3)).join("")).join("");
  const coasts = tiles.map((t) => t.coast.map((s) => roughen(s, t, 0.5, 2.6)).join("")).join("");
  const fjords = tiles.map((t) => t.fjord.map((s) => roughen(s, t, 2, 1.8)).join("")).join("");
  const dots = tiles.map(dotPath).join("");
  return (
    <svg className="ml-[332px] mt-[350px] block h-[1180px] w-[1200px]" viewBox="400 460 1200 1180" fill="none">
      <path d={borders} stroke="#bebebe" strokeWidth="1.15" strokeLinejoin="round" />
      <path d={coasts} stroke="#000" strokeWidth="2.7" strokeLinejoin="round" strokeLinecap="round" />
      <path d={fjords} stroke="#000" strokeWidth="2.6" strokeLinejoin="round" strokeLinecap="round" />
      <path d={dots} stroke="#000" strokeWidth="3.6" strokeLinecap="round" />
      {graticule().map((d, i) => (
        <path key={i} d={d} stroke="#b0b0b0" strokeWidth="2.2" />
      ))}
      <polygon points={limb} stroke="#000" strokeWidth="2.2" />
      <g>
        <path d="M980.3 1040.3 997 1050 1013.9 1040.3M997 1048V1071" stroke="#b22222" strokeWidth="14" />
        <path d="M980.3 1040.3 997 1050 1013.9 1040.3M997 1049V1071" stroke="#fff" strokeWidth="1.5" />
      </g>
    </svg>
  );
}

/* ------------------------------------------------------------------ */
/* Flag of Spain                                                       */
/* ------------------------------------------------------------------ */

function Pillar({ x, flip }: { x: number; flip?: boolean }) {
  const ribbon = flip
    ? "M392 288Q440 284 494 300L496 322Q488 330 478 334L476 314Q430 300 392 312Z"
    : "M160 288Q112 284 62 300L60 322Q66 330 76 334L78 314Q120 300 160 312Z";
  const tail = flip
    ? "M416 326Q410 345 425 356Q452 368 490 370L490 388L480 402L474 384Q430 378 418 362Q412 345 416 326Z"
    : "M136 326Q142 345 130 356Q104 368 64 370L62 386L68 400L78 384Q124 378 136 362Q142 345 136 326Z";
  return (
    <g stroke="#4a3b10" strokeWidth="1.4">
      <rect x={x + 6} y="236" width="38" height="196" fill="#ccc" />
      <rect x={x + 12} y="238" width="8" height="192" fill="#e6e6e6" stroke="none" />
      <rect x={x + 34} y="238" width="8" height="192" fill="#aaa" stroke="none" />
      <rect x={x} y="214" width="50" height="14" rx="3" fill="#c8b100" />
      <rect x={x + 5} y="228" width="40" height="10" fill="#c8b100" />
      <path d={`M${x + 5} 432h40l4 8h4v15h-56v-15h4z`} fill="#c8b100" />
      <rect x={x - 11} y="456" width="73" height="30" fill="#005bbf" stroke="#333" />
      {[464, 474, 483].map((y) => (
        <path key={y} d={`M${x - 10} ${y}q9 -6 18 0t18 0t18 0t17 0`} stroke="#ddd" strokeWidth="3.4" fill="none" />
      ))}
      <path d={`M${x + 5} 212Q${x - 4} 190 ${x + 12} 188Q${x + 25} 180 ${x + 38} 188Q${x + 54} 190 ${x + 45} 212Z`} fill="#ad1519" stroke="#c8b100" strokeWidth="3" />
      <path d={`M${x + 5} 206h40v9h-40z`} fill="#c8b100" />
      <path d={`M${x + 25} 178v34M${x + 15} 188l-3 14M${x + 35} 188l3 14`} stroke="#c8b100" strokeWidth="3" />
      <path d={ribbon} fill="#ad1519" />
      <path d={tail} fill="#ad1519" />
    </g>
  );
}

function CoatOfArms() {
  return (
    <g transform="translate(99.5 101) scale(.33333)">
      <Pillar x={79} />
      <Pillar x={425} flip />
      <text x="78" y="304" fill="#c8b100" fontFamily="DejaVu Serif, serif" fontWeight="700" fontSize="20" textLength="64" transform="rotate(-1 110 300)">
        PLVS
      </text>
      <text x="404" y="303" fill="#c8b100" fontFamily="DejaVu Serif, serif" fontWeight="700" fontSize="20" textLength="84" transform="rotate(4 440 300)">
        VLTRA
      </text>
      {/* crown */}
      <path d="M166 176Q145 140 170 122Q200 112 222 118Q240 108 277 114Q314 108 332 118Q360 112 386 122Q410 140 390 176Q335 190 277 190Q220 190 166 176Z" fill="#ad1519" />
      <g fill="none" stroke="#7a6a10" strokeWidth="12">
        <path d="M176 160Q146 130 164 110Q190 92 218 106M218 164Q196 108 224 90Q252 82 272 104M277 160V92M336 164Q362 108 332 90Q304 82 282 104M380 160Q410 130 392 110Q366 92 338 106" />
      </g>
      <g fill="none" stroke="#c8b100" strokeWidth="9">
        <path d="M176 160Q146 130 164 110Q190 92 218 106M218 164Q196 108 224 90Q252 82 272 104M277 160V92M336 164Q362 108 332 90Q304 82 282 104M380 160Q410 130 392 110Q366 92 338 106" />
      </g>
      <g fill="none" stroke="#f5f5f5" strokeWidth="4.5" strokeDasharray="0.1 7" strokeLinecap="round">
        <path d="M164 170Q136 130 158 104Q190 86 216 98M210 110Q214 90 232 84Q256 80 270 98M277 96V152M346 110Q340 90 324 84Q300 80 284 98M392 170Q418 130 398 104Q366 86 340 98" />
      </g>
      <path d="M160 168L170 148L182 166L196 150L210 170L224 158L238 174L256 156L266 172L277 146L288 172L300 156L316 174L332 158L344 170L360 150L372 166L384 148L394 168L352 190H202Z" fill="#c8b100" stroke="#6b5b10" strokeWidth="1.5" />
      <g fill="#ad1519">
        <circle cx="190" cy="174" r="5" />
        <circle cx="234" cy="178" r="5" />
        <circle cx="320" cy="178" r="5" />
        <circle cx="364" cy="174" r="5" />
      </g>
      <path d="M202 186Q277 166 352 186L348 206Q277 188 206 206Z" fill="#c8b100" stroke="#6b5b10" strokeWidth="1.5" />
      <path d="M206 196Q277 182 348 196L346 208Q277 218 208 208Z" fill="#ad1519" stroke="#4a3b10" strokeWidth="1.5" />
      <g>
        <ellipse cx="238" cy="186" rx="8" ry="4" fill="#058e6e" />
        <rect x="269" y="180" width="16" height="7" fill="#ad1519" />
        <ellipse cx="314" cy="185" rx="8" ry="4" fill="#058e6e" />
      </g>
      <circle cx="277" cy="80" r="10" fill="#005bbf" stroke="#4a3b10" />
      <path d="M268 79h18v4h-18zM274 52h6v6h6v6h-6v8h-6v-8h-6v-6h6z" fill="#c8b100" stroke="#6b5b10" strokeWidth="1" />
      {/* shield */}
      <path d="M160 213H393V430Q393 462 360 471Q330 476 277 488Q224 476 194 471Q160 462 160 430Z" fill="#ccc" stroke="#333" strokeWidth="2" />
      <rect x="160" y="213" width="117" height="130" fill="#ad1519" stroke="#333" strokeWidth="1.5" />
      <rect x="277" y="213" width="116" height="130" fill="#ccc" stroke="#333" strokeWidth="1.5" />
      <path d="M160 343H277V430Q274 464 240 472Q215 478 190 468Q160 458 160 430Z" fill="#c8b100" stroke="#333" strokeWidth="1.5" />
      <path d="M173 343h13v122q-8 -4 -13 -12zM199 343h14v131q-8 0 -14 -2zM226 343h13v129q-6 2 -13 2zM252 343h13v111q-6 8 -13 12z" fill="#ad1519" />
      <path d="M277 343H393V430Q393 462 360 471Q325 476 300 464Q280 452 277 430Z" fill="#ad1519" stroke="#333" strokeWidth="1.5" />
      <g stroke="#6b5b10" strokeWidth="1.5" fill="#c8b100">
        <path d="M208 238v-10h6v5h5v-7h6v7h5v-5h6v10h-4v20h-20v-20z" />
        <path d="M190 262v-8h6v5h6v-5h6v5h22v-5h6v5h6v-5h6v8l-3 6v54h-49v-54z" />
        <path d="M187 318h64v7h-64z" />
      </g>
      <path d="M199 278h11v16h-11zM227 278h12v16h-12zM211 325v-10q8 -12 16 0v10z" fill="#0039f0" />
      <path d="M216 246h6v8h-6zM199 272h40M212 300h14" fill="#6b5b10" stroke="#6b5b10" strokeWidth="1.5" />
      {/* lion */}
      <path
        d="M340 236Q328 236 318 241L330 246L318 250L330 256L318 262L303 255L294 238L296 250L305 264L318 270L296 276L300 284L318 278L328 285L312 292L298 290L302 298L322 298L334 290L338 298L326 310L334 318L342 305L350 312L346 326L360 326L354 314L362 302L354 290L362 278Q372 262 370 248L378 234L366 240L364 260Q370 275 362 286L354 276L356 252Q352 236 340 236Z"
        fill="#db7fae"
        stroke="#6b2f4d"
        strokeWidth="1.5"
      />
      <path d="M338 232l2 -8l6 4l4 -5l4 5l6 -3l-2 10z" fill="#c8b100" stroke="#6b5b10" strokeWidth="1" />
      {/* chains of Navarre */}
      <g fill="none" stroke="#c8b100" strokeWidth="9" strokeDasharray="10 4">
        <path d="M294 360H376V440Q372 452 360 458H316Q300 450 294 440ZM294 360L376 452M376 360L300 450M335 360V458M294 402H376" />
        <circle cx="335" cy="402" r="26" strokeWidth="7" />
      </g>
      <g fill="none" stroke="#ad1519" strokeWidth="2.5" strokeDasharray="6 8">
        <path d="M294 360H376V440Q372 452 360 458H316Q300 450 294 440ZM294 360L376 452M376 360L300 450M335 360V458M294 402H376" />
      </g>
      <circle cx="335" cy="402" r="6" fill="#058e6e" />
      {/* fleur-de-lis escutcheon */}
      <ellipse cx="277" cy="342" rx="38" ry="42" fill="#ad1519" stroke="#333" strokeWidth="1.5" />
      <ellipse cx="277" cy="341" rx="28" ry="32" fill="#005bbf" stroke="#333" strokeWidth="1.5" />
      {[
        [264, 332],
        [290, 332],
        [277, 355],
      ].map(([x, y]) => (
        <path key={x} transform={`translate(${x} ${y})`} d="M0 -13Q5 -6 2 0Q10 -6 9 4L3 3V6H2L3 12H-3L-2 6H-3V3L-9 4Q-10 -6 -2 0Q-5 -6 0 -13Z" fill="#c8b100" />
      ))}
      {/* pomegranate */}
      <path d="M255 472q12 -6 21 6M299 472q-12 -6 -21 6M277 485v-14" stroke="#058e6e" strokeWidth="5" fill="none" />
      <circle cx="277" cy="463" r="11" fill="#e0c070" stroke="#6b5b10" />
      <path d="M277 456q5 8 0 15q-5 -7 0 -15z" fill="#ad1519" />
    </g>
  );
}

function Flag() {
  return (
    <div className="mt-[36px] h-[388px] w-[582px] shrink-0 border-[3px] border-[#111] bg-[#c60b1e]">
      <svg className="block h-[382px] w-[576px]" viewBox="0 0 576 382">
        <rect width="576" height="382" fill="#c60b1e" />
        <rect y="95" width="576" height="192" fill="#ffc400" />
        <CoatOfArms />
      </svg>
    </div>
  );
}

/* ------------------------------------------------------------------ */
/* GDACS banner                                                        */
/* ------------------------------------------------------------------ */

const starPoints = (cx: number, cy: number, r: number) =>
  Array.from({ length: 10 }, (_, i) => {
    const a = rad(i * 36 - 90);
    const q = i % 2 ? r * 0.382 : r;
    return `${(cx + q * Math.cos(a)).toFixed(2)},${(cy + q * Math.sin(a)).toFixed(2)}`;
  }).join(" ");

function EuStars() {
  return (
    <svg className="h-[80px] w-[80px]" viewBox="-40 -40 80 80" fill="#ffcc00">
      {Array.from({ length: 12 }, (_, i) => (
        <polygon key={i} points={starPoints(32.2 * Math.sin(rad(i * 30)), -32.2 * Math.cos(rad(i * 30)), 5)} />
      ))}
    </svg>
  );
}

function UnEmblem() {
  const leaves = [];
  for (let i = 0; i < 10; i++) {
    const a = 100 + i * 12.2;
    const x = 25 * Math.cos(rad(a));
    const y = 23.5 * Math.sin(rad(a));
    leaves.push(<ellipse key={`o${i}`} cx={x - 1.4} cy={y} rx="3.7" ry="0.95" transform={`rotate(${a + 62} ${x} ${y})`} />);
    leaves.push(<ellipse key={`i${i}`} cx={x + 0.6} cy={y} rx="3.2" ry="0.8" transform={`rotate(${a + 112} ${x} ${y})`} />);
  }
  return (
    <svg className="h-[64px] w-[64px]" viewBox="-32 -32 64 64">
      <g stroke="#fff" strokeWidth=".7" fill="none" opacity=".75">
        <circle cy="-4.5" r="19.5" />
        <circle cy="-4.5" r="14.8" />
        <circle cy="-4.5" r="10" />
        <circle cy="-4.5" r="5" />
        <path d="M0 -24V15M-19.5 -4.5H19.5M-13.8 -18.3L13.8 9.3M13.8 -18.3L-13.8 9.3" />
      </g>
      <g fill="#fff">
        <path d="M-9 -8L-5 -10L0 -11L5 -9L9 -9L10 -4L7 0L6 4L9 6L7 10L3 11L1 7L-1 3L-3 4L-6 2L-9 5L-13 5L-16 1L-12 0L-9 -3ZM7 -17L11 -14L13 -10L11 -9L8 -13Z" />
        <path d="M0 -4L3 -6L4 -2L1 0Z" fill="#009edb" />
        <path d="M-4 3L0 4L-1 8L-4 6Z" fill="#009edb" />
        <g>{leaves}</g>
        <g transform="scale(-1 1)">{leaves}</g>
      </g>
      <path d="M-6 23.5Q0 20 7 25.5M6 23.5Q0 20 -7 25.5" stroke="#fff" strokeWidth="1.4" fill="none" />
    </svg>
  );
}

function Banner() {
  return (
    <div className="mt-[56px] flex h-[98px] w-[582px] shrink-0 items-center border-[3px] border-[#050a10] bg-[linear-gradient(90deg,#003399_0%,#003399_25%,#006abd_50%,#009edb_75%,#009fdd_100%)]">
      <div className="ml-[30px]">
        <EuStars />
      </div>
      <div className="ml-[30px] w-[294px] whitespace-nowrap text-center text-[19.3px] font-bold leading-[22.2px] text-white [-webkit-text-stroke:3.4px_#07101c] [paint-order:stroke_fill]">
        <div>Global Disaster Alert and</div>
        <div>Coordination System</div>
        <div className="pl-[2px] text-[19px]">https://gdacs.org</div>
      </div>
      <div className="ml-[38px]">
        <UnEmblem />
      </div>
    </div>
  );
}

/* ------------------------------------------------------------------ */
/* Window                                                              */
/* ------------------------------------------------------------------ */

function TitleBar() {
  const light = "h-[24px] w-[24px] rounded-full border border-[#a9a9a9] bg-[#cdcdcd]";
  return (
    <div className="grid h-[57px] grid-cols-[400px_1fr_400px] items-center border-b border-[#d4d4d4] bg-[#e7e7e7]">
      <div className="flex gap-4 pl-[16px]">
        <div className={light} />
        <div className={light} />
        <div className={light} />
      </div>
      <div className="pb-[4px] pr-[4px] text-center font-[Inter,sans-serif] text-[26px] font-bold text-[#a6a6a6]">EventViewer (4/9)</div>
    </div>
  );
}

export default function App() {
  const box = "rounded-[13px] border-2 border-[#7b7b7b] [box-shadow:0_0_0_0.5px_#7b7b7b]";
  return (
    <div className="h-[2058px] w-[2936px] overflow-hidden bg-white pl-[67px] pt-[51px] font-['DejaVu_Sans',sans-serif] text-[27.8px] leading-[33px] text-black">
      <div className="flex h-[1923px] w-[2802px] flex-col overflow-hidden rounded-[21px] border border-[#bdbdbd] bg-white shadow-[0_28px_50px_rgba(0,0,0,0.22),0_0_40px_rgba(0,0,0,0.10)]">
        <TitleBar />
        <div className="flex flex-1">
          <div className="w-[1940px] shrink-0">
            <Globe />
            <div className="ml-[280px] mt-[121px]">DR 1016679</div>
          </div>
          <div className="flex w-[582px] shrink-0 flex-col items-center whitespace-nowrap text-center">
            <div className="mt-[212px] pr-[2px] text-[69.2px] font-bold leading-[80px]">Drought</div>
            <div className="mt-[6px] text-[40px] font-bold leading-[48px] text-[#d98800]">Orange alert</div>
            <div className="mt-[36px]">
              <div>Wed, 15 May 2024</div>
              <div>(39.416 °N, 18.713 °E)</div>
            </div>
            <div className="mt-[57px] text-[33.3px] font-bold leading-[40px] text-[#808080]">Severity</div>
            <div className={`mt-[21px] h-[89px] w-[578px] bg-[#e7e7e7] pt-[9px] ${box}`}>
              <div>Medium impact for agricultural drought</div>
              <div>in 305575 km2</div>
            </div>
            <div className={`mt-[13px] h-[57px] w-[274px] bg-[#e7e7e7] pt-[9px] ${box}`}>0 people affected</div>
            <div className={`mt-[94px] h-[89px] w-[427px] bg-white pt-[9px] ${box}`}>
              <div className="pl-[2px]">
                <span className="italic">Other countries affected</span>
                <span className="ml-[4px]">:</span>
              </div>
              <div className="pl-[9px]">Greece, Italy, Malta, Türkiye</div>
            </div>
            <div className="mt-[115px] text-[47.4px] font-bold leading-[58px]">Spain</div>
            <Flag />
            <Banner />
          </div>
        </div>
      </div>
    </div>
  );
}
